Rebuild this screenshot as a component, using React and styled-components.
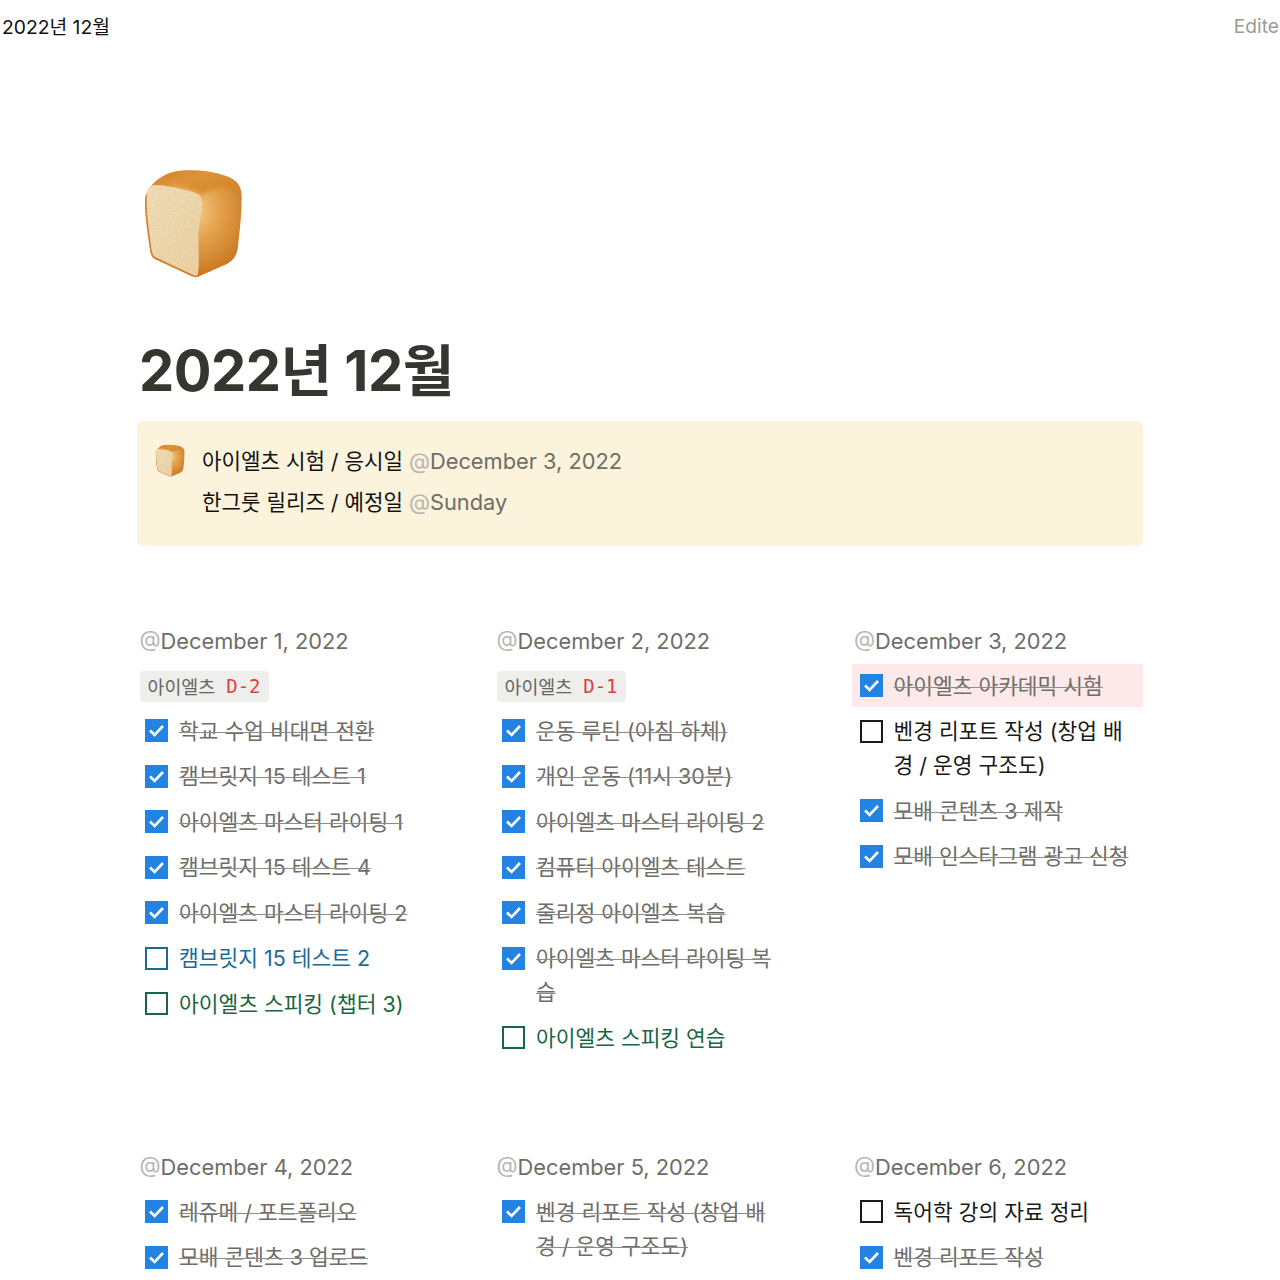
import { useId } from 'react'
import styled, { createGlobalStyle } from 'styled-components'

const GlobalStyle = createGlobalStyle`
  html, body {
    margin: 0;
    padding: 0;
    background: #fff;
  }
  body {
    font-family: Inter, "Noto Sans CJK KR", sans-serif;
    color: #111;
  }
`

const Page = styled.div`
  width: 1280px;
  height: 1280px;
  overflow: hidden;
`

const TopBar = styled.header`
  height: 52px;
  padding: 0 1px 0 2px;
  box-sizing: border-box;
  display: flex;
  align-items: center;
  justify-content: space-between;
  white-space: nowrap;
`

const Crumb = styled.div`
  font-size: 19.3px;
  color: #111;
`

const Saved = styled.div`
  font-size: 19.2px;
  color: #9c9b97;
`

const Content = styled.main`
  width: 1006px;
  margin-left: 137px;
`

const Cover = styled.div`
  height: 279px;
  padding: 116px 0 0 6px;
  box-sizing: border-box;
`

const Title = styled.h1`
  margin: 0 0 10px 2px;
  font-size: 56px;
  line-height: 80px;
  font-weight: 700;
  color: #37352f;
  letter-spacing: -0.5px;
`

const Callout = styled.section`
  height: 125px;
  box-sizing: border-box;
  background: #fbf3db;
  border-radius: 5px;
  padding: 20px 18px;
  display: flex;
  gap: 17px;
`

const CalloutIcon = styled.div`
  flex: none;
  width: 30px;
  padding-top: 3px;
`

const CalloutLines = styled.div`
  display: flex;
  flex-direction: column;
`

const CalloutLine = styled.div`
  font-size: 21.2px;
  line-height: 41px;
  height: 41px;
`

const Mention = styled.span`
  font-size: 21.8px;
  color: #6e6d68;
`

const At = styled.span`
  color: #b7b6b2;
`

const Grid = styled.div`
  display: grid;
  grid-template-columns: 291px 291.5px 291.5px;
  column-gap: 66px;
  row-gap: 82.5px;
  margin-top: 72px;
`

const Column = styled.div`
  display: flex;
  flex-direction: column;
`

const DateLine = styled.div`
  height: 46px;
  line-height: 46px;
  padding-left: 2.5px;
  font-size: 21.8px;
  color: #6e6d68;
`

const TagRow = styled.div`
  height: 45px;
  display: flex;
  align-items: center;
  padding-left: 2.5px;
`

const Tag = styled.div`
  height: 31px;
  display: flex;
  align-items: center;
  gap: 11px;
  padding: 0 8px 2px;
  box-sizing: border-box;
  background: #eeeeec;
  border-radius: 4px;
  font-size: 18.4px;
  color: #66655f;
`

const TagCount = styled.span`
  font-family: "DejaVu Sans Mono", "Liberation Mono", monospace;
  font-size: 19px;
  color: #e03e3e;
`

const Todo = styled.div`
  display: flex;
  gap: 11px;
  padding: 4.5px 8px;
  margin-bottom: 2.5px;
  background: ${props => (props.$marked ? '#fde9e9' : 'transparent')};
`

const Box = styled.div`
  flex: none;
  width: 23px;
  height: 23px;
  margin-top: 5.5px;
  box-sizing: border-box;
  border: ${props => (props.$done ? 'none' : '2.4px solid currentColor')};
  background: ${props => (props.$done ? '#2383e2' : 'transparent')};
  color: ${props => props.$tone};
`

const Label = styled.div`
  font-size: 21.45px;
  line-height: 34px;
  color: ${props => props.$tone};
  text-decoration: ${props => (props.$done ? 'line-through' : 'none')};
  text-decoration-color: #8d8c87;
  text-decoration-thickness: 1px;
`

const tones = {
  plain: '#1a1a18',
  blue: '#1b6a9a',
  green: '#1a6640',
}

function Bread({ size }) {
  const id = useId()
  return (
    <svg width={size} height={size * 335 / 300} viewBox="40 55 300 335" style={{ display: 'block' }}>
      <defs>
        <linearGradient id={id + 'crust'} x1="0" y1="0" x2="1" y2="0.7">
          <stop offset="0" stopColor="#cf7d25" />
          <stop offset="0.5" stopColor="#dd9339" />
          <stop offset="1" stopColor="#d08229" />
        </linearGradient>
        <radialGradient id={id + 'side'} cx="0.5" cy="0.38" r="0.62">
          <stop offset="0" stopColor="#f4cf98" />
          <stop offset="0.38" stopColor="#e6a750" />
          <stop offset="1" stopColor="#c9731f" />
        </radialGradient>
        <linearGradient id={id + 'crumb'} x1="0" y1="0" x2="1" y2="1">
          <stop offset="0" stopColor="#f2e1bf" />
          <stop offset="1" stopColor="#ebd3a4" />
        </linearGradient>
        <filter id={id + 'soft'}>
          <feGaussianBlur stdDeviation="7" />
        </filter>
        <filter id={id + 'grain'} x="0" y="0" width="100%" height="100%">
          <feTurbulence type="fractalNoise" baseFrequency="0.28" numOctaves="2" seed="4" />
          <feColorMatrix values="0 0 0 0 0.72  0 0 0 0 0.52  0 0 0 0 0.26  0 0 0 1.1 -0.35" />
          <feComposite in2="SourceAlpha" operator="in" />
        </filter>
        <clipPath id={id + 'loaf'}>
          <path d="M46 150 C50 115 85 78 135 66 C180 58 240 62 290 80 C325 92 338 115 336 150 C336 200 328 260 324 298 C320 322 305 338 285 346 L205 381 C198 384 190 382 180 377 L75 328 C66 322 62 312 60 296 C54 250 44 190 46 150 Z" />
        </clipPath>
      </defs>
      <g clipPath={`url(#${id}loaf)`}>
        <rect x="40" y="55" width="300" height="335" fill={`url(#${id}side)`} />
        <path
          d="M30 150 L30 50 L350 50 L350 140 C325 115 270 100 215 135 C190 120 120 92 55 100 Z"
          fill={`url(#${id}crust)`}
          filter={`url(#${id}soft)`}
        />
      </g>
      <path
        id={id + 'face'}
        d="M52 132 C52 114 62 106 80 106 C130 110 180 122 205 134 C216 142 220 155 217 175 C212 205 206 240 206 265 C206 300 210 340 204 376 C200 380 194 378 186 374 L76 322 C68 316 66 306 64 290 C60 250 48 180 52 132 Z"
        fill={`url(#${id}crumb)`}
      />
      <use href={`#${id}face`} filter={`url(#${id}grain)`} />
    </svg>
  )
}

function Check() {
  return (
    <svg width="23" height="23" viewBox="0 0 23 23" fill="none" style={{ display: 'block' }}>
      <path d="M5 11.5 L9.6 16 L18 7" stroke="#fff" strokeWidth="2.6" />
    </svg>
  )
}

function DateMention({ text }) {
  return (
    <Mention>
      <At>@</At>
      {text}
    </Mention>
  )
}

function TodoItem({ item }) {
  const tone = tones[item.tone] || tones.plain
  return (
    <Todo $marked={item.marked}>
      <Box $done={item.done} $tone={tone}>{item.done && <Check />}</Box>
      <Label $done={item.done} $tone={item.done ? '#6e6d68' : tone}>{item.text}</Label>
    </Todo>
  )
}

const done = text => ({ text, done: true })

const days = [
  {
    date: 'December 1, 2022',
    count: 'D-2',
    items: [
      done('학교 수업 비대면 전환'),
      done('캠브릿지 15 테스트 1'),
      done('아이엘츠 마스터 라이팅 1'),
      done('캠브릿지 15 테스트 4'),
      done('아이엘츠 마스터 라이팅 2'),
      { text: '캠브릿지 15 테스트 2', tone: 'blue' },
      { text: '아이엘츠 스피킹 (챕터 3)', tone: 'green' },
    ],
  },
  {
    date: 'December 2, 2022',
    count: 'D-1',
    items: [
      done('운동 루틴 (아침 하체)'),
      done('개인 운동 (11시 30분)'),
      done('아이엘츠 마스터 라이팅 2'),
      done('컴퓨터 아이엘츠 테스트'),
      done('줄리정 아이엘츠 복습'),
      done('아이엘츠 마스터 라이팅 복습'),
      { text: '아이엘츠 스피킹 연습', tone: 'green' },
    ],
  },
  {
    date: 'December 3, 2022',
    items: [
      { text: '아이엘츠 아카데믹 시험', done: true, marked: true },
      { text: '벤경 리포트 작성 (창업 배경 / 운영 구조도)' },
      done('모배 콘텐츠 3 제작'),
      done('모배 인스타그램 광고 신청'),
    ],
  },
  {
    date: 'December 4, 2022',
    items: [done('레쥬메 / 포트폴리오'), done('모배 콘텐츠 3 업로드')],
  },
  {
    date: 'December 5, 2022',
    items: [done('벤경 리포트 작성 (창업 배경 / 운영 구조도)')],
  },
  {
    date: 'December 6, 2022',
    items: [{ text: '독어학 강의 자료 정리' }, done('벤경 리포트 작성')],
  },
]

function App() {
  return (
    <Page>
      <GlobalStyle />
      <TopBar>
        <Crumb>2022년 12월</Crumb>
        <Saved>Edite</Saved>
      </TopBar>
      <Content>
        <Cover>
          <Bread size={100} />
        </Cover>
        <Title>2022년 12월</Title>
        <Callout>
          <CalloutIcon>
            <Bread size={30} />
          </CalloutIcon>
          <CalloutLines>
            <CalloutLine>아이엘츠 시험 / 응시일 <DateMention text="December 3, 2022" /></CalloutLine>
            <CalloutLine>한그룻 릴리즈 / 예정일 <DateMention text="Sunday" /></CalloutLine>
          </CalloutLines>
        </Callout>
        <Grid>
          {days.map(day => (
            <Column key={day.date}>
              <DateLine><At>@</At>{day.date}</DateLine>
              {day.count && (
                <TagRow>
                  <Tag>아이엘츠 <TagCount>{day.count}</TagCount></Tag>
                </TagRow>
              )}
              {day.items.map(item => (
                <TodoItem key={item.text} item={item} />
              ))}
            </Column>
          ))}
        </Grid>
      </Content>
    </Page>
  )
}

export default App
